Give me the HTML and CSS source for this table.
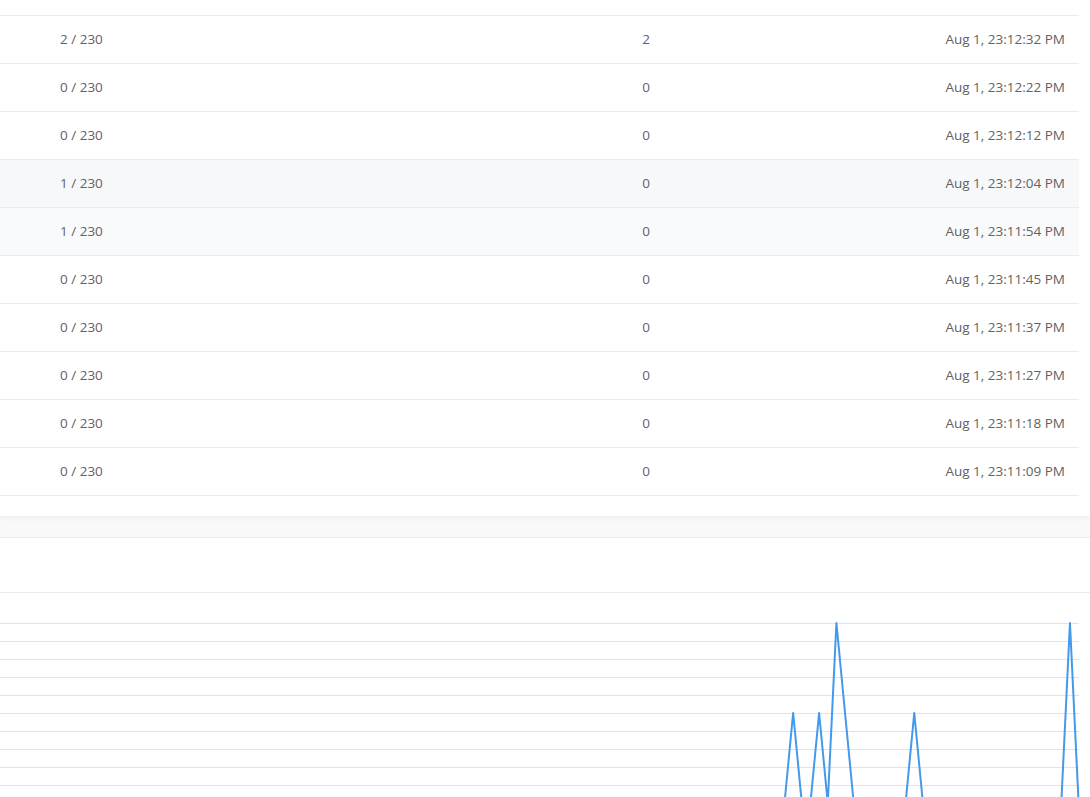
FILE: index.html
```html
<!DOCTYPE html>
<html>
<head>
<meta charset="utf-8">
<link rel="stylesheet" href="styles.css">
</head>
<body>
<div class="page">
  <section class="card table-card">
    <div class="table-head"></div>
    <table class="log">
      <colgroup><col class="c1"><col class="c2"><col class="c3"></colgroup>
      <tbody>
        <tr><td>2 / 230</td><td class="mid">2</td><td class="time">Aug 1, 23:12:32 PM</td></tr>
        <tr><td>0 / 230</td><td class="mid">0</td><td class="time">Aug 1, 23:12:22 PM</td></tr>
        <tr><td>0 / 230</td><td class="mid">0</td><td class="time">Aug 1, 23:12:12 PM</td></tr>
        <tr class="hl1"><td>1 / 230</td><td class="mid">0</td><td class="time">Aug 1, 23:12:04 PM</td></tr>
        <tr class="hl2"><td>1 / 230</td><td class="mid">0</td><td class="time">Aug 1, 23:11:54 PM</td></tr>
        <tr><td>0 / 230</td><td class="mid">0</td><td class="time">Aug 1, 23:11:45 PM</td></tr>
        <tr><td>0 / 230</td><td class="mid">0</td><td class="time">Aug 1, 23:11:37 PM</td></tr>
        <tr><td>0 / 230</td><td class="mid">0</td><td class="time">Aug 1, 23:11:27 PM</td></tr>
        <tr><td>0 / 230</td><td class="mid">0</td><td class="time">Aug 1, 23:11:18 PM</td></tr>
        <tr><td>0 / 230</td><td class="mid">0</td><td class="time">Aug 1, 23:11:09 PM</td></tr>
      </tbody>
    </table>
  </section>
  <section class="card chart-card">
    <div class="chart-head"></div>
    <svg class="chart" width="1090" height="220" viewBox="0 0 1090 220">
      <g class="grid">
        <line x1="0" y1="30" x2="1079" y2="30"/>
        <line x1="0" y1="48" x2="1079" y2="48"/>
        <line x1="0" y1="66" x2="1079" y2="66"/>
        <line x1="0" y1="84" x2="1079" y2="84"/>
        <line x1="0" y1="102" x2="1079" y2="102"/>
        <line x1="0" y1="120" x2="1079" y2="120"/>
        <line x1="0" y1="138" x2="1079" y2="138"/>
        <line x1="0" y1="156" x2="1079" y2="156"/>
        <line x1="0" y1="174" x2="1079" y2="174"/>
        <line x1="0" y1="192" x2="1079" y2="192"/>
        <line x1="0" y1="210" x2="1079" y2="210"/>
      </g>
      <path class="series" d="M -10 210 H 784.5 L 793.15 120 L 801.8 210 H 810.45 L 819.1 120 L 827.75 210 L 836.4 30 L 845.05 120 L 853.7 210 H 905.6 L 914.25 120 L 922.9 210 H 1061.3 L 1069.95 30 L 1078.6 210"/>
    </svg>
  </section>
</div>
</body>
</html>
```

FILE: styles.css
```css
html, body {
  margin: 0;
  padding: 0;
}
body {
  background: #f9f9fa;
  font-family: "Open Sans", "Liberation Sans", sans-serif;
  font-size: 13.5px;
  color: #636363;
  overflow: hidden;
}
.page {
  display: flex;
  flex-direction: column;
  gap: 21px;
}
.card {
  background: #fff;
}
.table-card {
  padding: 0 11px 20px 0;
  box-shadow: 0 2px 5px rgba(0, 0, 0, 0.05);
}
.table-head {
  height: 15px;
}
.log {
  width: 1079px;
  border-collapse: collapse;
  table-layout: fixed;
}
.log col.c1 { width: 400px; }
.log col.c2 { width: 492px; }
.log col.c3 { width: 187px; }
.log tr {
  height: 48px;
  border-top: 1px solid #ebebeb;
  border-bottom: 1px solid #ebebeb;
}
.log td {
  padding: 0 0 2px 0;
  height: 45px;
  line-height: 18px;
  vertical-align: middle;
  white-space: nowrap;
}
.log td:first-child {
  padding-left: 60px;
}
.log td.mid {
  text-align: center;
}
.log td.time {
  text-align: right;
  padding-right: 14px;
}
.log tr.hl1 { background: #f7f8fa; }
.log tr.hl2 { background: #f9fafb; }
.chart-card {
  border-top: 1px solid #ebebee;
}
.chart-head {
  height: 54px;
  border-bottom: 1px solid #ebebeb;
}
.chart {
  display: block;
}
.grid line {
  stroke: #e2e2e2;
  stroke-width: 1;
  shape-rendering: crispEdges;
}
.series {
  fill: none;
  stroke: #4499ea;
  stroke-width: 2;
  stroke-linejoin: round;
}
```
